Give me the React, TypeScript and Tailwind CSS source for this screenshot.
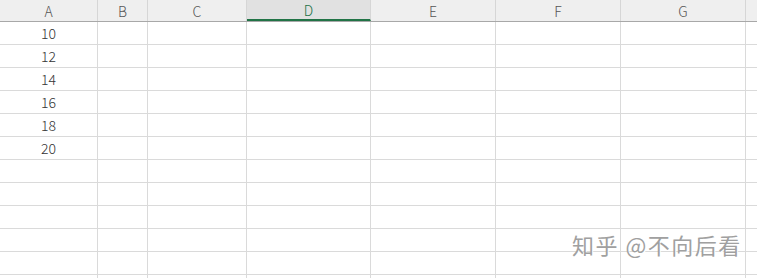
const cols = [
  { name: "A", w: "w-[98px]" },
  { name: "B", w: "w-[50px]" },
  { name: "C", w: "w-[99px]" },
  { name: "D", w: "w-[124px]" },
  { name: "E", w: "w-[125px]" },
  { name: "F", w: "w-[125px]" },
  { name: "G", w: "w-[125px]" },
  { name: "", w: "w-[125px]" },
];

const values = ["10", "12", "14", "16", "18", "20", "", "", "", "", "", ""];

export default function App() {
  return (
    <div className="relative h-[278px] w-[757px] overflow-hidden bg-white font-['Noto_Sans_CJK_SC','Noto_Sans',sans-serif] text-[14px] text-[#333]">
      {/* Column headers */}
      <div className="flex h-[22px] border-b border-[#a8a8a8] bg-[#efefef]">
        {cols.map((c, j) => (
          <div
            key={j}
            className={`${c.w} shrink-0 border-r border-[#d6d6d6] flex items-center justify-center leading-none font-light ${
              c.name === "D" ? "bg-[#e1e1e1] border-b-2 border-b-[#217346] text-[#217346]" : "text-[#555]"
            }`}
          >
            {c.name}
          </div>
        ))}
      </div>

      {/* Rows */}
      {values.map((v, i) => (
        <div key={i} className="flex h-[23px] border-b border-[#dadada]">
          {cols.map((c, j) => (
            <div
              key={j}
              className={`${c.w} shrink-0 border-r border-[#dadada] flex items-center justify-center leading-none font-light`}
            >
              {j === 0 ? v : ""}
            </div>
          ))}
        </div>
      ))}

      {/* Watermark */}
      <div className="absolute left-[572px] top-[233px] text-[22px] leading-none tracking-[1.5px] text-[#a0a0a0] [text-shadow:1px_1px_0_#fff]">
        知乎 @不向后看
      </div>
    </div>
  );
}
